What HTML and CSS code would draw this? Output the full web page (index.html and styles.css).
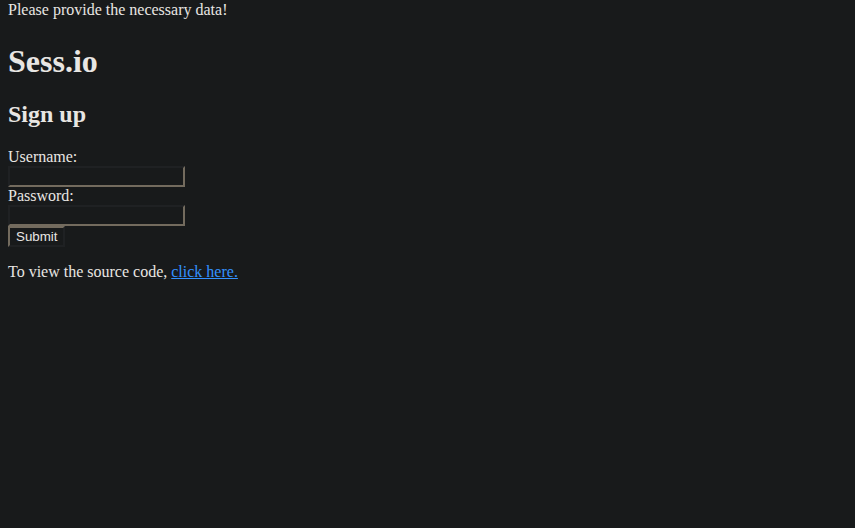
FILE: index.html
```html
<!DOCTYPE html>
<html>
<head>
<meta charset="utf-8">
<title>Sess.io</title>
<link rel="stylesheet" href="styles.css">
</head>
<body class="page">
<div class="flash">Please provide the necessary data!</div>
<h1 class="title">Sess.io</h1>
<h2 class="subtitle">Sign up</h2>
<form class="signup">
Username:<br>
<input class="field" type="text" name="username"><br>
Password:<br>
<input class="field" type="password" name="password"><br>
<input class="btn" type="submit" value="Submit">
</form>
<p class="source">To view the source code, <a class="link" href="#">click here.</a></p>
</body>
</html>
```
FILE: styles.css
```css
html {
  background: #181a1b;
}
.page {
  margin: 1px 8px 8px 8px;
  background: #181a1b;
  color: #e8e6e3;
  font-family: "Liberation Serif", "Times New Roman", serif;
  font-size: 16px;
}
.flash {
  padding-bottom: 2.5px;
}
.title {
  font-size: 32px;
  margin: 21.44px 0;
}
.subtitle {
  font-size: 24px;
  margin: 19.92px 0;
}
.signup {
  margin: 0;
}
.field {
  box-sizing: border-box;
  width: 177px;
  height: 21px;
  margin: 0;
  padding: 1px 2px;
  background: #181a1b;
  color: #e8e6e3;
  font-family: "Liberation Sans", Arial, sans-serif;
  font-size: 13.333px;
  border-style: solid;
  border-width: 2px;
  border-color: #1f2123 #736b5e #736b5e #1f2123;
}
.btn {
  margin: 0;
  padding: 1px 6px;
  background: #181a1b;
  color: #e8e6e3;
  font-family: "Liberation Sans", Arial, sans-serif;
  font-size: 13.333px;
  border-style: solid;
  border-width: 2px;
  border-color: #736b5e #1f2123 #1f2123 #736b5e;
  border-radius: 0;
}
.source {
  margin: 16px 0;
}
.link {
  color: #3391ff;
}
```
